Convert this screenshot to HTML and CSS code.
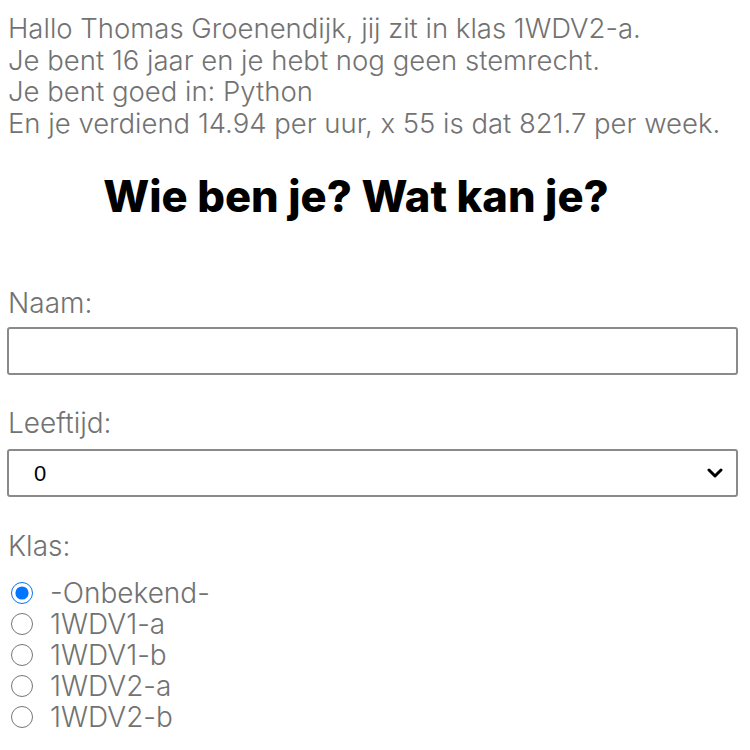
FILE: index.html
```html
<!DOCTYPE html>
<html lang="nl">
<head>
<meta charset="utf-8">
<title>Wie ben je?</title>
<link rel="stylesheet" href="styles.css">
</head>
<body>
<div class="intro">
  <p>Hallo Thomas Groenendijk, jij zit in klas 1WDV2-a.</p>
  <p>Je bent 16 jaar en je hebt nog geen stemrecht.</p>
  <p>Je bent goed in: Python</p>
  <p>En je verdiend 14.94 per uur, x 55 is dat 821.7 per week.</p>
</div>
<h1 class="title">Wie ben je? Wat kan je?</h1>
<form class="form">
  <label class="field-label" for="naam">Naam:</label>
  <input class="text-input" id="naam" type="text">
  <label class="field-label" for="leeftijd">Leeftijd:</label>
  <div class="select-wrap">
    <select class="select" id="leeftijd"><option>0</option></select>
    <svg class="chevron" width="16" height="10" viewBox="0 0 16 10"><path d="M2 2 L8 8 L14 2" fill="none" stroke="#000" stroke-width="3" stroke-linecap="round" stroke-linejoin="round"/></svg>
  </div>
  <span class="field-label">Klas:</span>
  <div class="radios">
    <label class="radio-row"><input type="radio" name="klas" checked><span>-Onbekend-</span></label>
    <label class="radio-row"><input type="radio" name="klas"><span>1WDV1-a</span></label>
    <label class="radio-row"><input type="radio" name="klas"><span>1WDV1-b</span></label>
    <label class="radio-row"><input type="radio" name="klas"><span>1WDV2-a</span></label>
    <label class="radio-row"><input type="radio" name="klas"><span>1WDV2-b</span></label>
  </div>
</form>
</body>
</html>
```
FILE: styles.css
```css
html, body {
  margin: 0;
  padding: 0;
  background: #fff;
}
body {
  padding: 0 12px 0 8px;
  font-family: Inter, "Open Sans", sans-serif;
  font-weight: 300;
  color: #727272;
  overflow: hidden;
  height: 750px;
}
.intro {
  margin-top: 13px;
}
.intro p {
  margin: 0;
  font-size: 27.5px;
  line-height: 31.5px;
  white-space: nowrap;
}
.title {
  margin: 33px 0 0 0;
  padding-right: 34px;
  text-align: center;
  font-weight: 800;
  font-size: 43.5px;
  line-height: 48px;
  color: #000;
}
.form {
  display: flex;
  flex-direction: column;
  margin-top: 68px;
}
.field-label {
  display: block;
  font-size: 28px;
  line-height: 30px;
  margin-bottom: 9px;
}
.text-input {
  box-sizing: border-box;
  height: 48px;
  width: 731px;
  margin: 0 0 33px -1px;
  border: 2px solid #8a8a8a;
  border-radius: 3px;
  background: #fff;
}
.select-wrap {
  position: relative;
  width: 731px;
  margin: 2px 0 34px -1px;
}
.select {
  appearance: none;
  -webkit-appearance: none;
  box-sizing: border-box;
  width: 100%;
  height: 48px;
  border: 2px solid #8a8a8a;
  border-radius: 3px;
  background: #fff;
  padding: 0 0 0 25px;
  font-family: "Liberation Sans", Arial, sans-serif;
  font-size: 22px;
  color: #000;
}
.chevron {
  position: absolute;
  right: 15px;
  top: 19px;
  pointer-events: none;
}
.radios {
  display: flex;
  flex-direction: column;
  margin-top: 7px;
}
.radio-row {
  display: flex;
  align-items: center;
  height: 31px;
  font-size: 28px;
}
.radio-row input {
  flex: none;
  width: 22px;
  height: 22px;
  margin: 0 17px 0 3px;
  accent-color: #0075ff;
}
```
